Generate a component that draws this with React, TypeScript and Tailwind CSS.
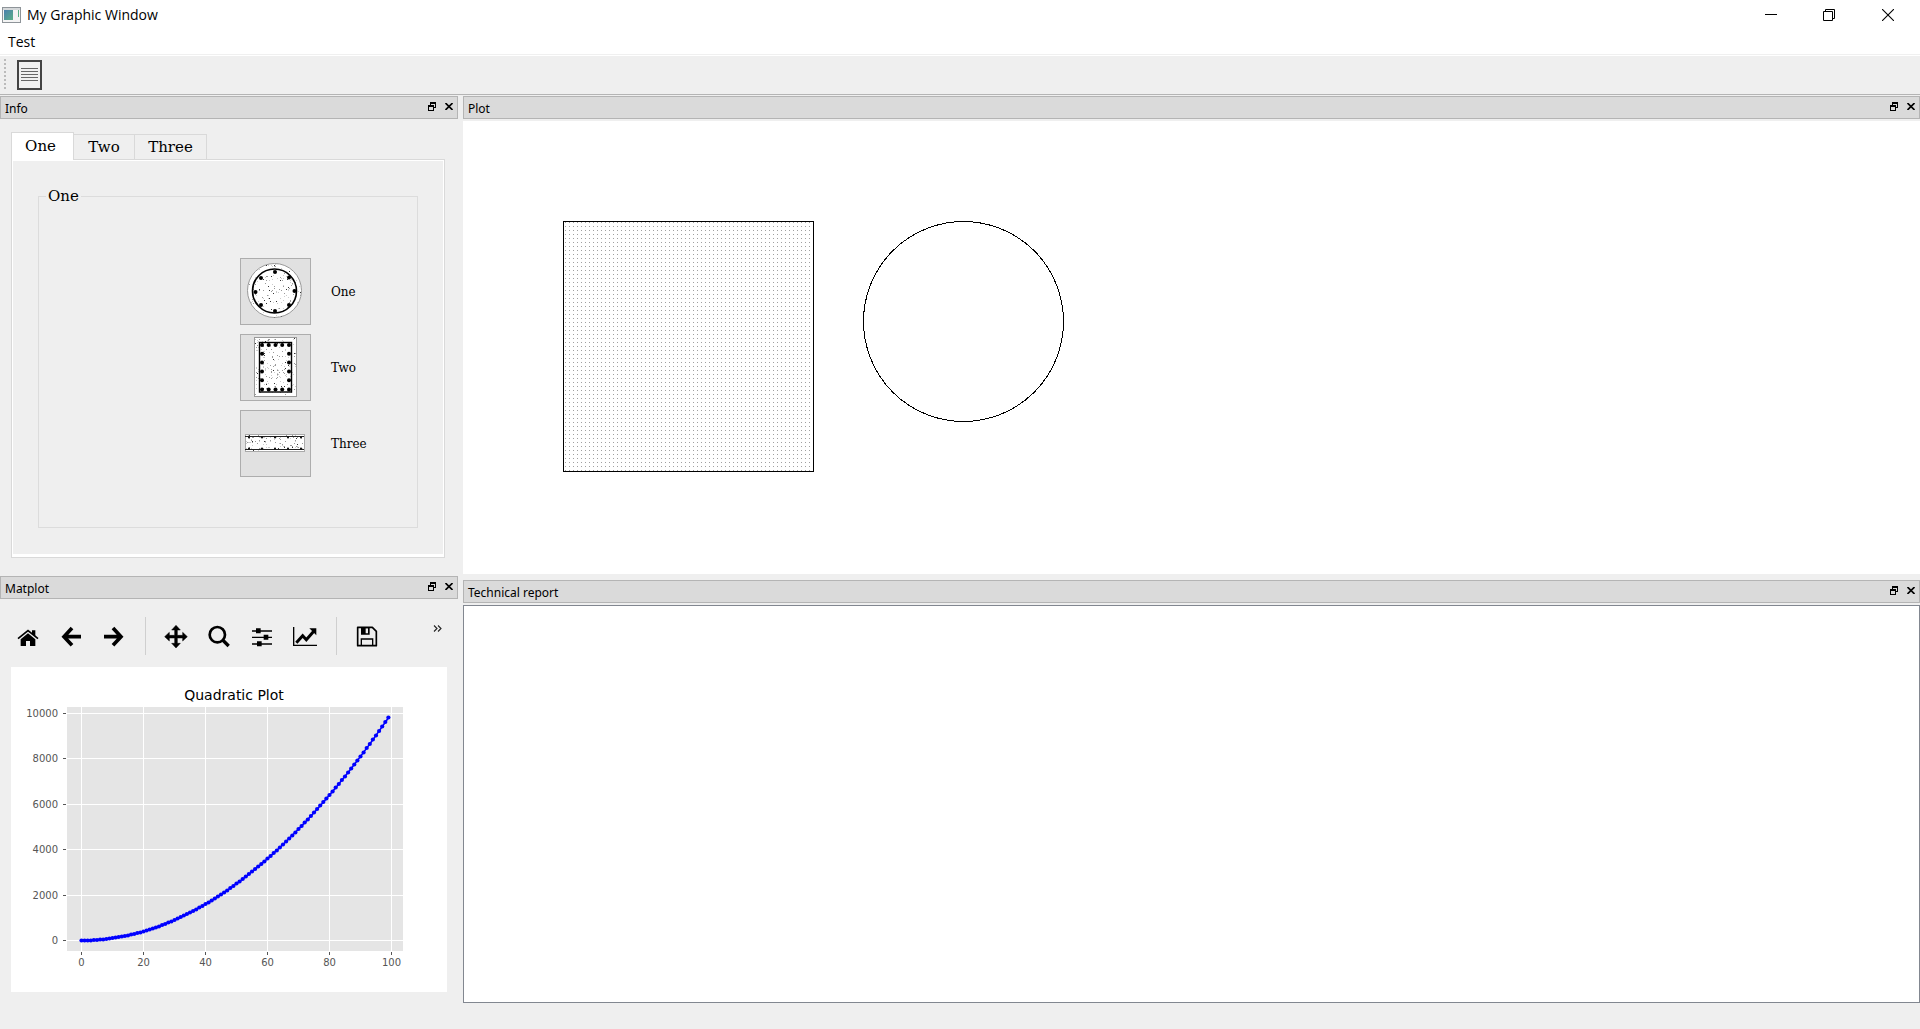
import React from "react";

const SERIF = "font-['DejaVu_Serif',serif]";

function seeded(seed: number) {
  let s = seed;
  return () => {
    s = (s * 16807) % 2147483647;
    return s / 2147483647;
  };
}

function Speckle({ x, y, w, h, n, seed }: { x: number; y: number; w: number; h: number; n: number; seed: number }) {
  const rnd = seeded(seed);
  const dots = Array.from({ length: n }, () => {
    const px = x + rnd() * w;
    const py = y + rnd() * h;
    const tone = rnd();
    return { px, py, c: tone > 0.85 ? "#333" : tone > 0.5 ? "#999" : "#ccc" };
  });
  return (
    <g>
      {dots.map((d, i) => (
        <rect key={i} x={Math.round(d.px)} y={Math.round(d.py)} width="1" height="1" fill={d.c} />
      ))}
    </g>
  );
}

function CircleSection() {
  const bars = [[34, 13], [48, 18.5], [53.5, 32], [48, 46], [34, 52], [20, 46], [14.5, 33], [20, 19]];
  return (
    <svg width="69" height="65" viewBox="0 0 69 65" aria-hidden="true">
      <clipPath id="disc"><circle cx="33.5" cy="31.5" r="27" /></clipPath>
      <circle cx="33.5" cy="31.5" r="27" fill="#fff" stroke="#999" />
      <g clipPath="url(#disc)"><Speckle x={6} y={4} w={55} h={55} n={190} seed={77} /></g>
      <circle cx="33.5" cy="32" r="22" fill="none" stroke="#000" strokeWidth="1.6" />
      {bars.map(([x, y]) => <circle key={`${x}-${y}`} cx={x} cy={y} r="2" />)}
    </svg>
  );
}

function RectSection() {
  const bars: number[][] = [];
  [21, 27.7, 34.5, 41.2, 48].forEach((x) => bars.push([x, 10], [x, 54.5]));
  [18.7, 27.5, 36.4, 45.3].forEach((y) => bars.push([21, y], [48, y]));
  return (
    <svg width="69" height="65" viewBox="0 0 69 65" aria-hidden="true">
      <rect x="13.5" y="2.5" width="42" height="59" fill="#fff" stroke="#999" />
      <Speckle x={14} y={3} w={40} h={57} n={190} seed={913} />
      <rect x="18.5" y="7.5" width="32" height="49.5" fill="none" stroke="#000" strokeWidth="1.4" />
      {bars.map(([x, y]) => <circle key={`${x}-${y}`} cx={x} cy={y} r="2" />)}
    </svg>
  );
}

function SlabSection() {
  return (
    <svg width="69" height="65" viewBox="0 0 69 65" aria-hidden="true">
      <rect x="4.5" y="23.5" width="59" height="17" fill="#fff" stroke="#aaa" />
      <Speckle x={5} y={24} w={57} h={15} n={110} seed={421} />
      <path d="M4 25.5H63M4 38.5H63" stroke="#222" strokeWidth="1" />
      {[8, 21, 34, 47, 60].map((x) => (
        <g key={x}><circle cx={x} cy="26.5" r="1" /><circle cx={x} cy="37.5" r="1" /></g>
      ))}
    </svg>
  );
}

function DockHeader({ title }: { title: string }) {
  return (
    <header className="flex h-[23px] shrink-0 items-center border border-[#b4b4b4] bg-[#dadada] pr-1 pl-1 font-['Noto_Sans',sans-serif] text-[12px] leading-4">
      <h2 className="flex-1 pt-0.5">{title}</h2>
      <button type="button" aria-label={`Float ${title}`} className="mr-[9px] pb-0.5">
        <svg width="8" height="9" viewBox="0 0 8 9" shapeRendering="crispEdges">
          <path d="M2 0H8V6H6V5H7V2H3V3H2ZM0 3H6V9H0ZM1 5V8H5V5Z" fillRule="evenodd" />
        </svg>
      </button>
      <button type="button" aria-label={`Close ${title}`} className="pb-0.5">
        <svg width="8" height="7" viewBox="0 0 8 7"><path d="M.5 0L7.5 7M7.5 0L.5 7" stroke="#000" strokeWidth="1.6" /></svg>
      </button>
    </header>
  );
}

function ToolButton({ label, x, children }: { label: string; x: number; children: React.ReactNode }) {
  return (
    <button type="button" aria-label={label} className="flex h-[39px] w-[43px] shrink-0 items-center justify-center">
      <svg width="25" height="25" viewBox={`${x} 192 75 75`}>{children}</svg>
    </button>
  );
}

function Divider() {
  return <span className="mx-[9px] h-[38px] w-px bg-[#cfcfcf]" />;
}

function Chart() {
  const px = (v: number) => 70.5 + v * 3.1;
  const py = (v: number) => 273.5 - v * 0.02273;
  const pts = Array.from({ length: 100 }, (_, i) => [px(i), py(i * i)]);
  return (
    <svg width="436" height="325" viewBox="0 0 436 325" role="img" aria-label="Quadratic Plot" className="bg-white font-['DejaVu_Sans',sans-serif]">
      <rect x="56" y="40" width="336" height="244" fill="#e5e5e5" />
      {[0, 20, 40, 60, 80, 100].map((v) => (
        <g key={v}>
          <path d={`M${px(v)} 40V284`} stroke="#fff" />
          <path d={`M${px(v)} 285V288`} stroke="#555" />
          <text x={px(v)} y="299" textAnchor="middle" fontSize="10" fill="#555">{v}</text>
        </g>
      ))}
      {[0, 2000, 4000, 6000, 8000, 10000].map((v) => {
        const y = Math.floor(py(v)) + 0.5;
        return (
          <g key={v}>
            <path d={`M56 ${y}H392`} stroke="#fff" />
            <path d={`M52 ${y}H55`} stroke="#555" />
            <text x="47" y={y + 3.5} textAnchor="end" fontSize="10" fill="#555">{v}</text>
          </g>
        );
      })}
      <polyline points={pts.map((p) => p.join(",")).join(" ")} fill="none" stroke="#00f" strokeWidth="1.6" />
      {pts.map(([x, y], i) => <circle key={i} cx={x} cy={Math.round(y * 2) / 2} r="2.1" fill="#00f" />)}
      <text x="223" y="33" textAnchor="middle" fontSize="14">Quadratic Plot</text>
    </svg>
  );
}

function InfoDock() {
  const options = [
    { name: "One", art: <CircleSection /> },
    { name: "Two", art: <RectSection /> },
    { name: "Three", art: <SlabSection /> },
  ];
  return (
    <section className="flex flex-1 flex-col">
      <DockHeader title="Info" />
      <div className={`flex flex-1 flex-col pt-[13px] pr-[13px] pb-4 pl-[11px] ${SERIF}`}>
        <div role="tablist" className="flex items-end text-[15px] leading-6">
          <button type="button" role="tab" aria-selected="true" className="relative -mb-px h-7 w-[63px] border border-b-0 border-[#d9d9d9] bg-white pr-1 pb-0.5">One</button>
          <button type="button" role="tab" aria-selected="false" className="h-[25px] w-[61px] border border-b-0 border-l-0 border-[#d9d9d9]">Two</button>
          <button type="button" role="tab" aria-selected="false" className="h-[25px] w-[72px] border border-b-0 border-l-0 border-[#d9d9d9]">Three</button>
        </div>
        <div role="tabpanel" className="flex flex-1 border border-[#d9d9d9]">
          <div className="flex flex-1 border border-b-[3px] border-white pt-[23px] pr-[25px] pb-[26px] pl-[25px]">
            <fieldset className="min-w-0 flex-1 border border-[#dcdcdc] pl-[7px]">
              <legend className="px-0.5 text-[15px] leading-6">One</legend>
              <div className="flex flex-col gap-[9px] pt-[50px] pl-[194px]">
                {options.map((o) => (
                  <div key={o.name} className="flex items-center gap-5">
                    <button type="button" aria-labelledby={`opt-${o.name}`} className="border border-[#adadad] bg-[#e1e1e1]">{o.art}</button>
                    <span id={`opt-${o.name}`} className="text-[12px] leading-5">{o.name}</span>
                  </div>
                ))}
              </div>
            </fieldset>
          </div>
        </div>
      </div>
    </section>
  );
}

function MatplotDock() {
  return (
    <section>
      <DockHeader title="Matplot" />
      <div className="flex pt-[18px] pb-[11px] pl-[7px]">
        <ToolButton label="Home" x={48}>
          <path d="M62 238L84 220L106 238V258H90V243H78V258H62Z" />
          <path d="M54 236L84 212L114 236" fill="none" stroke="#000" strokeWidth="5" />
          <path d="M96 211H106V229L96 221Z" />
        </ToolButton>
        <ToolButton label="Back" x={177}><path d="M216 204L192 230L216 256M194 230H243" fill="none" stroke="#000" strokeWidth="11" /></ToolButton>
        <ToolButton label="Forward" x={306}><path d="M339 204L363 230L339 256M361 230H312" fill="none" stroke="#000" strokeWidth="11" /></ToolButton>
        <Divider />
        <ToolButton label="Pan" x={492}>
          <path d="M528 196L541 210H532V226H548V217L562 230L548 243V234H532V250H541L528 264L515 250H524V234H508V243L494 230L508 217V226H524V210H515Z" stroke="#000" strokeWidth="1.5" />
        </ToolButton>
        <ToolButton label="Zoom" x={621}>
          <circle cx="652" cy="224" r="23" fill="none" stroke="#000" strokeWidth="8" />
          <path d="M668 240L686 258" stroke="#000" strokeWidth="10" />
        </ToolButton>
        <ToolButton label="Subplots" x={750}>
          <path d="M756 213H816M756 232H816M756 252H816" stroke="#000" strokeWidth="4" />
          <path d="M768 205H782V220H768ZM791 224H805V239H791ZM771 244H785V259H771Z" />
        </ToolButton>
        <ToolButton label="Customize" x={879}>
          <path d="M881 201V256H951" fill="none" stroke="#000" strokeWidth="4" />
          <path d="M889 248L908 227L919 239L942 213" fill="none" stroke="#000" strokeWidth="9" />
          <path d="M928 205H949V226Z" />
        </ToolButton>
        <Divider />
        <ToolButton label="Save" x={1065}>
          <path d="M1073 202H1117L1129 214V257H1073Z" fill="none" stroke="#000" strokeWidth="5" strokeLinejoin="round" />
          <path d="M1083 202H1109V224H1083ZM1097 205V220H1104V205Z" fillRule="evenodd" />
          <path d="M1084 257V237H1118V257" fill="none" stroke="#000" strokeWidth="4" />
        </ToolButton>
        <button type="button" aria-label="More tools" className="mt-2 ml-[44px] self-start">
          <svg width="9" height="7" viewBox="0 0 9 7"><path d="M1 .5L4 3.5L1 6.5M5 .5L8 3.5L5 6.5" fill="none" stroke="#222" strokeWidth="1.1" /></svg>
        </button>
      </div>
      <div className="pb-[11px] pl-[11px]"><Chart /></div>
    </section>
  );
}

export default function App() {
  return (
    <div className="flex min-h-screen flex-col bg-[#efefef] text-black">
      <div className="flex h-[29px] items-center bg-white pl-0.5 font-['Open_Sans',sans-serif]">
        <svg width="19" height="16" viewBox="0 0 19 16" aria-hidden="true">
          <defs>
            <linearGradient id="app" x1="0" y1="0" x2="1" y2="1"><stop offset="0" stopColor="#4a7fae" /><stop offset="1" stopColor="#5bb087" /></linearGradient>
          </defs>
          <rect x=".5" y=".5" width="18" height="15" fill="#f4f4f4" stroke="#8e9499" />
          <rect x="1" y="1" width="17" height="2" fill="#d5d8da" />
          <rect x="2" y="3" width="9" height="10" fill="url(#app)" />
          <rect x="16" y="3" width="1" height="7" fill="#5bb087" />
        </svg>
        <h1 className="flex-1 pl-1.5 text-[14px] leading-5">My Graphic Window</h1>
        <button type="button" aria-label="Minimize" className="mr-[46px]">
          <svg width="12" height="12" viewBox="0 0 12 12"><path d="M0 5.5H12" stroke="#000" /></svg>
        </button>
        <button type="button" aria-label="Restore" className="mr-[47px]">
          <svg width="12" height="12" viewBox="0 0 12 12"><path d="M.5 2.5H9.5V11.5H.5ZM2.5 2V.5H11.5V9.5H10" fill="none" stroke="#000" /></svg>
        </button>
        <button type="button" aria-label="Close" className="mr-[26px]">
          <svg width="12" height="12" viewBox="0 0 12 12"><path d="M0 0L12 12M12 0L0 12" stroke="#000" strokeWidth="1.1" /></svg>
        </button>
      </div>
      <nav className="flex h-[27px] items-center border-b border-white bg-white font-['Open_Sans',sans-serif]">
        <div className="flex h-full flex-1 items-center border-b border-[#f0f0f0] pl-2">
          <button type="button" className="text-[14px] leading-5">Test</button>
        </div>
      </nav>
      <div className="flex h-[39px] items-start border-b border-[#b4b4b4] pl-1">
        <svg width="2" height="31" viewBox="0 0 2 31" className="mt-[3px]" aria-hidden="true">
          {[0, 4, 8, 12, 16, 20, 24, 28].map((y) => <rect key={y} y={y} width="2" height="2" fill="#bbb" />)}
        </svg>
        <button type="button" aria-label="Report" className="mt-1 ml-[11px]">
          <svg width="26" height="30" viewBox="0 0 26 30">
            <rect x="1" y="1" width="23" height="28" fill="#f0f0f0" stroke="#444" strokeWidth="2" />
            <path d="M4 8.5H21M4 11.5H21M4 14.5H21M4 17.5H21M4 20.5H21" stroke="#666" strokeWidth="1.2" />
          </svg>
        </button>
      </div>
      <main className="flex flex-1 gap-[5px] pt-px pb-[26px]">
        <div className="flex w-[458px] shrink-0 flex-col gap-0.5">
          <InfoDock />
          <MatplotDock />
        </div>
        <div className="flex min-w-0 flex-1 flex-col gap-1.5">
          <section className="flex flex-1 flex-col gap-0.5">
            <DockHeader title="Plot" />
            <div className="flex-1 bg-white pt-[100px] pl-[100px]">
              <svg width="502" height="252" viewBox="0 0 502 252" role="img" aria-label="Dotted square and circle">
                <defs>
                  <pattern id="dots" width="4" height="4" patternUnits="userSpaceOnUse"><rect x="2" y="1" width="1" height="1" fill="#a0a0a0" /></pattern>
                </defs>
                <rect x=".5" y=".5" width="250" height="250" fill="url(#dots)" stroke="#000" />
                <circle cx="400.5" cy="100.5" r="100" fill="none" stroke="#000" shapeRendering="crispEdges" />
              </svg>
            </div>
          </section>
          <section className="flex h-[423px] flex-col gap-0.5">
            <DockHeader title="Technical report" />
            <textarea aria-label="Technical report" className="flex-1 resize-none border border-[#828790] bg-white outline-none" />
          </section>
        </div>
      </main>
    </div>
  );
}
